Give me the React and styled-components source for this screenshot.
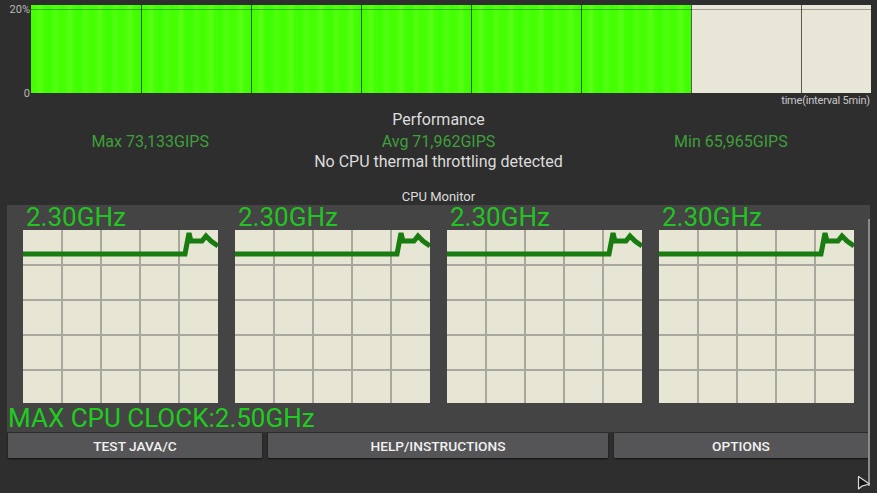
import React from 'react';
import styled, { createGlobalStyle } from 'styled-components';

const Global = createGlobalStyle`
  html, body { margin: 0; padding: 0; background: #2e2e2e; }
  body { font-family: Roboto, "Liberation Sans", sans-serif; overflow: hidden; }
`;

const Page = styled.div`
  position: relative;
  width: 877px;
  height: 493px;
  background: #2e2e2e;
  color: #dcdcdc;
`;

const History = styled.div`
  display: flex;
  padding-top: 5px;
`;

const Axis = styled.div`
  width: 31px;
  height: 88px;
  display: flex;
  flex-direction: column;
  justify-content: space-between;
  align-items: flex-end;
  font-size: 11px;
  color: #b8b8b8;
  line-height: 11px;
  span { margin-top: -1px; margin-right: 1px; }
  span:last-child { margin-bottom: -6px; }
`;

const Chart = styled.div`
  position: relative;
  display: flex;
  width: 840px;
  height: 88px;
  &::after {
    content: '';
    position: absolute;
    left: 0; right: 0; top: 4px;
    height: 1px;
    background: rgba(0, 0, 0, 0.3);
  }
`;

const Cell = styled.div`
  width: ${p => p.w}px;
  height: 100%;
  box-sizing: border-box;
  border-left: ${p => (p.first ? 'none' : '1px solid rgba(40,40,40,0.75)')};
  background: ${p =>
    p.filled
      ? 'repeating-linear-gradient(90deg, #42ff00 0px, #4cff08 6px, #5cff18 9px, #44ff02 13px, #3cff00 19px, #52ff10 24px, #42ff00 30px)'
      : '#e8e6d6'};
`;

const TimeLabel = styled.div`
  text-align: right;
  padding-right: 7px;
  font-size: 11px;
  color: #c8c8c8;
  margin-top: 2px;
  line-height: 12px;
  letter-spacing: -0.2px;
`;

const Title = styled.div`
  text-align: center;
  font-size: ${p => p.size || 16}px;
  color: #dcdcdc;
  line-height: ${p => p.lh || 20}px;
`;

const Stats = styled.div`
  display: grid;
  grid-template-columns: repeat(3, 1fr);
  font-size: 16px;
  line-height: 20px;
  margin-top: 2px;
  color: #3f9f3a;
  text-align: center;
  span:first-child { margin-left: 8px; }
`;

const Panel = styled.div`
  margin: 0 7px 0 7px;
  width: 863px;
  height: 227px;
  background: #444444;
  box-sizing: border-box;
  padding: 0 0 0 1px;
`;

const Monitors = styled.div`
  display: flex;
  gap: 17px;
  padding-left: 15px;
`;

const Monitor = styled.div`
  width: 195px;
  display: flex;
  flex-direction: column;
`;

const Freq = styled.div`
  font-size: 26px;
  line-height: 25px;
  height: 25px;
  color: #22c322;
  padding-left: 3px;
  white-space: nowrap;
`;

const Graph = styled.svg`
  display: block;
  width: 195px;
  height: 173px;
  background: #e7e6d4;
`;

const MaxClock = styled.div`
  font-size: 26px;
  line-height: 28px;
  color: #1fcc1f;
  margin-top: 1px;
  white-space: nowrap;
`;

const Buttons = styled.div`
  display: flex;
  gap: 6px;
  padding: 1px 7px 0 8px;
`;

const Button = styled.button`
  width: ${p => p.w}px;
  height: 25px;
  border: none;
  border-radius: 1px;
  background: #555557;
  color: #f0f0f0;
  font-family: Roboto, "Liberation Sans", sans-serif;
  font-size: 13.7px;
  font-weight: 500;
  padding: 0;
  box-shadow: 0 1px 2px rgba(0, 0, 0, 0.6);
`;

const Scrollbar = styled.div`
  position: absolute;
  left: 868px;
  top: 219px;
  width: 2px;
  height: 267px;
  background: #8a8a8a;
`;

const Pointer = styled.svg`
  position: absolute;
  left: 857px;
  top: 475px;
`;

const cells = [
  { w: 110, filled: true },
  { w: 110, filled: true },
  { w: 110, filled: true },
  { w: 110, filled: true },
  { w: 110, filled: true },
  { w: 110, filled: true },
  { w: 110, filled: false },
  { w: 70, filled: false },
];

function CpuGraph() {
  const cols = [39, 78, 117, 156];
  const rows = [35, 70, 105, 140];
  return (
    <Graph viewBox="0 0 195 173">
      {cols.map(x => (
        <line key={'c' + x} x1={x} y1="0" x2={x} y2="173" stroke="#a9a89e" strokeWidth="2" />
      ))}
      {rows.map(y => (
        <line key={'r' + y} x1="0" y1={y} x2="195" y2={y} stroke="#a9a89e" strokeWidth="2" />
      ))}
      <polyline
        points="0,24 162,24 166,3 168,11 179,11 183,6 188,11 195,16"
        fill="none"
        stroke="#187c10"
        strokeWidth="5"
        strokeLinejoin="miter"
      />
    </Graph>
  );
}

export default function App() {
  return (
    <Page>
      <Global />
      <History>
        <Axis>
          <span>20%</span>
          <span>0</span>
        </Axis>
        <Chart>
          {cells.map((c, i) => (
            <Cell key={i} w={c.w} filled={c.filled} first={i === 0} />
          ))}
        </Chart>
      </History>
      <TimeLabel>time(interval 5min)</TimeLabel>
      <div style={{ height: 3 }} />
      <Title>Performance</Title>
      <Stats>
        <span>Max 73,133GIPS</span>
        <span>Avg 71,962GIPS</span>
        <span>Min 65,965GIPS</span>
      </Stats>
      <Title>No CPU thermal throttling detected</Title>
      <div style={{ height: 16 }} />
      <Title size={13} lh={17}>CPU Monitor</Title>
      <Panel>
        <Monitors>
          {[0, 1, 2, 3].map(i => (
            <Monitor key={i}>
              <Freq>2.30GHz</Freq>
              <CpuGraph />
            </Monitor>
          ))}
        </Monitors>
        <MaxClock>MAX CPU CLOCK:2.50GHz</MaxClock>
      </Panel>
      <Buttons>
        <Button w={254}>TEST JAVA/C</Button>
        <Button w={340}>HELP/INSTRUCTIONS</Button>
        <Button w={254}>OPTIONS</Button>
      </Buttons>
      <Scrollbar />
      <Pointer width="14" height="16" viewBox="0 0 14 16">
        <path d="M1.5 1.5 L1.5 14 L4.8 11.2 L12.5 9 Z" fill="#141414" stroke="#d8d8d8" strokeWidth="1.2" strokeLinejoin="round" />
      </Pointer>
    </Page>
  );
}
